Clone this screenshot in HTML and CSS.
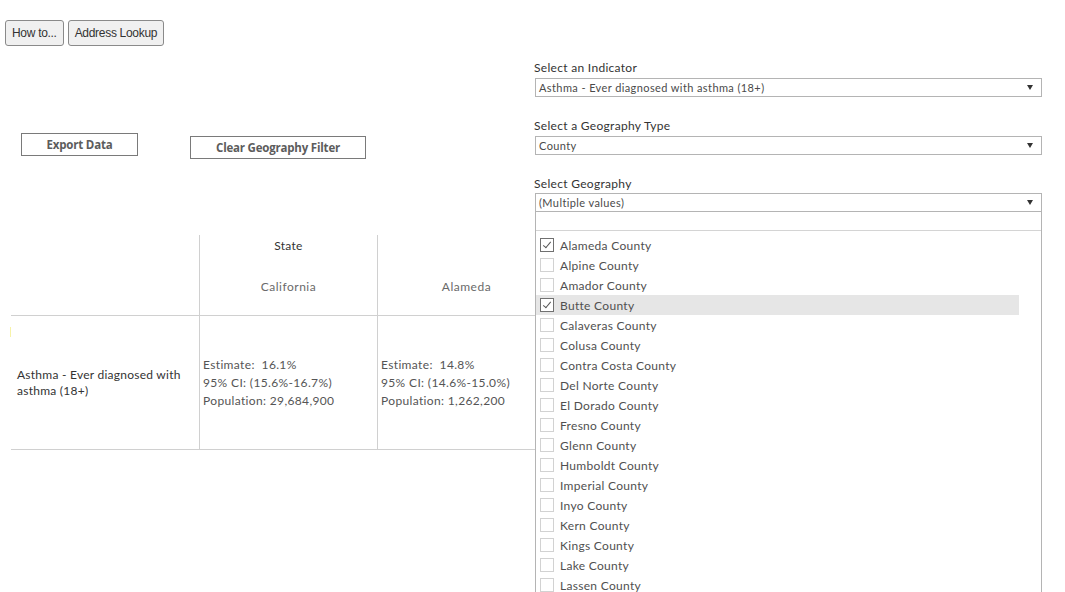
FILE: index.html
```html
<!DOCTYPE html>
<html>
<head>
<meta charset="utf-8">
<link rel="stylesheet" href="styles.css">
</head>
<body>
<div class="topbar">
  <button class="sys-btn">How to...</button>
  <button class="sys-btn">Address Lookup</button>
</div>
<div class="main">
  <div class="left">
    <div class="actions">
      <button class="act-btn export">Export Data</button>
      <button class="act-btn clear">Clear Geography Filter</button>
    </div>
    <div class="crosstab">
      <div class="cell head blank"></div>
      <div class="cell head col">
        <div class="level">State</div>
        <div class="member">California</div>
      </div>
      <div class="cell head col">
        <div class="level"></div>
        <div class="member">Alameda</div>
      </div>
      <div class="cell body rowlabel"><span class="mark"></span>Asthma - Ever diagnosed with asthma (18+)</div>
      <div class="cell body col data">
        <div>Estimate:&nbsp; 16.1%</div>
        <div>95% CI: (15.6%-16.7%)</div>
        <div>Population: 29,684,900</div>
      </div>
      <div class="cell body col data">
        <div>Estimate:&nbsp; 14.8%</div>
        <div>95% CI: (14.6%-15.0%)</div>
        <div>Population: 1,262,200</div>
      </div>
    </div>
  </div>
  <div class="filters">
    <div class="flabel first">Select an Indicator</div>
    <div class="dropdown"><span>Asthma - Ever diagnosed with asthma (18+)</span><span class="arrow"></span></div>
    <div class="flabel">Select a Geography Type</div>
    <div class="dropdown"><span>County</span><span class="arrow"></span></div>
    <div class="flabel">Select Geography</div>
    <div class="geo">
      <div class="dropdown"><span>(Multiple values)</span><span class="arrow"></span></div>
      <div class="popup">
        <div class="search"></div>
        <ul class="options">
          <li><span class="cb checked"></span>Alameda County</li>
          <li><span class="cb"></span>Alpine County</li>
          <li><span class="cb"></span>Amador County</li>
          <li class="hover"><span class="cb checked"></span>Butte County</li>
          <li><span class="cb"></span>Calaveras County</li>
          <li><span class="cb"></span>Colusa County</li>
          <li><span class="cb"></span>Contra Costa County</li>
          <li><span class="cb"></span>Del Norte County</li>
          <li><span class="cb"></span>El Dorado County</li>
          <li><span class="cb"></span>Fresno County</li>
          <li><span class="cb"></span>Glenn County</li>
          <li><span class="cb"></span>Humboldt County</li>
          <li><span class="cb"></span>Imperial County</li>
          <li><span class="cb"></span>Inyo County</li>
          <li><span class="cb"></span>Kern County</li>
          <li><span class="cb"></span>Kings County</li>
          <li><span class="cb"></span>Lake County</li>
          <li><span class="cb"></span>Lassen County</li>
        </ul>
      </div>
    </div>
  </div>
</div>
</body>
</html>
```
FILE: styles.css
```css
html, body {
  margin: 0;
  padding: 0;
  background: #fff;
  overflow: hidden;
  height: 592px;
}
body {
  font-family: Lato, "Open Sans", sans-serif;
  color: #333;
}
.topbar {
  display: flex;
  gap: 4px;
  padding: 20px 0 0 5px;
  height: 26px;
}
.sys-btn {
  height: 26px;
  padding: 0 6px;
  margin: 0;
  background: #f0f0f0;
  border: 1px solid #8a8a8a;
  border-radius: 3px;
  font-family: "Liberation Sans", Arial, sans-serif;
  font-size: 12px;
  letter-spacing: -0.3px;
  color: #333;
}
.main {
  display: flex;
}
.left {
  width: 534px;
  flex: none;
}
.actions {
  display: flex;
  align-items: flex-start;
  padding: 87px 0 0 21px;
  gap: 52px;
}
.act-btn {
  margin: 0;
  height: 23px;
  background: #fff;
  border: 1px solid #7a7a7a;
  border-radius: 0;
  font-family: "Open Sans", sans-serif;
  font-weight: 700;
  font-size: 11.5px;
  letter-spacing: -0.2px;
  color: #5c5c5c;
  padding: 0;
}
.export { width: 117px; }
.clear { width: 176px; margin-top: 3px; }
.crosstab {
  margin: 76px 0 0 11px;
  display: grid;
  grid-template-columns: 188px 178px 178px;
  grid-template-rows: 81px 134px;
  width: 544px;
}
.cell.head { border-bottom: 1px solid #d0d0d0; }
.cell.body { border-bottom: 1px solid #d0d0d0; }
.cell.col { border-left: 1px solid #d0d0d0; }
.head.col {
  display: flex;
  flex-direction: column;
  align-items: center;
  font-size: 12px;
  letter-spacing: 0.3px;
}
.level {
  height: 16px;
  line-height: 16px;
  margin-top: 3px;
  color: #333;
}
.member {
  margin-top: 25px;
  line-height: 16px;
  color: #6a6a6a;
  letter-spacing: 0.5px;
}
.rowlabel {
  position: relative;
  display: flex;
  align-items: center;
  padding: 0 8px 0 6px;
  font-size: 12px;
  line-height: 16px;
  letter-spacing: 0.25px;
  color: #333;
}
.mark {
  position: absolute;
  left: -1px;
  top: 11px;
  width: 1px;
  height: 10px;
  background: #f7f3a8;
}
.data {
  display: flex;
  flex-direction: column;
  justify-content: center;
  padding-left: 3px;
  font-size: 12px;
  line-height: 18px;
  letter-spacing: 0.35px;
  color: #555;
}
.filters {
  width: 508px;
  flex: none;
  position: relative;
  z-index: 2;
}
.flabel {
  margin: 21px 0 2px 0;
  height: 16px;
  line-height: 16px;
  font-size: 12px;
  letter-spacing: 0.3px;
  color: #333;
}
.flabel.first { margin-top: 14px; }
.dropdown {
  margin-left: 1px;
  height: 17px;
  border: 1px solid #b4b4b4;
  display: flex;
  align-items: center;
  justify-content: space-between;
  padding: 0 8px 0 3px;
  font-size: 11px;
  letter-spacing: 0.4px;
  color: #4a4a4a;
  background: #fff;
}
.geo { position: relative; margin-top: -1px; }
.arrow {
  width: 0;
  height: 0;
  border-left: 3.5px solid transparent;
  border-right: 3.5px solid transparent;
  border-top: 5px solid #333;
}
.popup {
  position: absolute;
  left: 1px;
  top: 19px;
  width: 505px;
  height: 400px;
  border: 1px solid #b4b4b4;
  border-top: none;
  background: #fff;
}
.search {
  height: 18px;
  border-bottom: 1px solid #d4d4d4;
}
.options {
  list-style: none;
  margin: 0;
  padding: 4px 0 0 0;
}
.options li {
  height: 20px;
  width: 483px;
  display: flex;
  align-items: center;
  font-size: 12px;
  letter-spacing: 0.3px;
  color: #505050;
  padding-left: 4px;
  box-sizing: border-box;
}
.options li.hover { background: #e6e6e6; }
.cb {
  width: 12px;
  height: 12px;
  border: 1px solid #d2d2d2;
  margin-right: 6px;
  position: relative;
  background: #fff;
  flex: none;
}
.cb.checked { border-color: #707070; }
.cb.checked::after {
  content: "";
  position: absolute;
  left: 4px;
  top: 1px;
  width: 3px;
  height: 7px;
  border-right: 1.2px solid #555;
  border-bottom: 1.2px solid #555;
  transform: rotate(40deg);
}
```
